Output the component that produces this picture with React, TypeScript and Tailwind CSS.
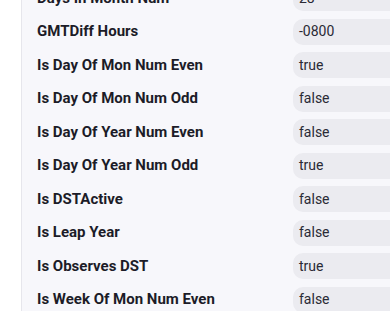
const rows: [string, string][] = [
  ['Days In Month Num', '28'],
  ['GMTDiff Hours', '-0800'],
  ['Is Day Of Mon Num Even', 'true'],
  ['Is Day Of Mon Num Odd', 'false'],
  ['Is Day Of Year Num Even', 'false'],
  ['Is Day Of Year Num Odd', 'true'],
  ['Is DSTActive', 'false'],
  ['Is Leap Year', 'false'],
  ['Is Observes DST', 'true'],
  ['Is Week Of Mon Num Even', 'false'],
];

export default function App() {
  return (
    <div className="flex h-[311px] w-[390px] overflow-hidden bg-white font-['Roboto',sans-serif]">
      <div className="w-[22px] shrink-0 border-r border-[#e6e6ec] bg-white" />
      <div className="flex-1 overflow-hidden bg-[#f7f7fb] pl-[15px]">
        <div className="mt-[-15px] flex flex-col gap-[7.5px]">
          {rows.map(([label, value]) => (
            <div key={label} className="flex h-[26px] items-center">
              <div className="w-[256px] shrink-0 text-[15px] font-bold text-[#1c1c28]">{label}</div>
              <div className="flex h-[26px] w-[120px] shrink-0 items-center rounded-[10px] bg-[#ebebf0] px-[6px] text-[14px] text-[#2a2a35]">
                {value}
              </div>
            </div>
          ))}
        </div>
      </div>
    </div>
  );
}
